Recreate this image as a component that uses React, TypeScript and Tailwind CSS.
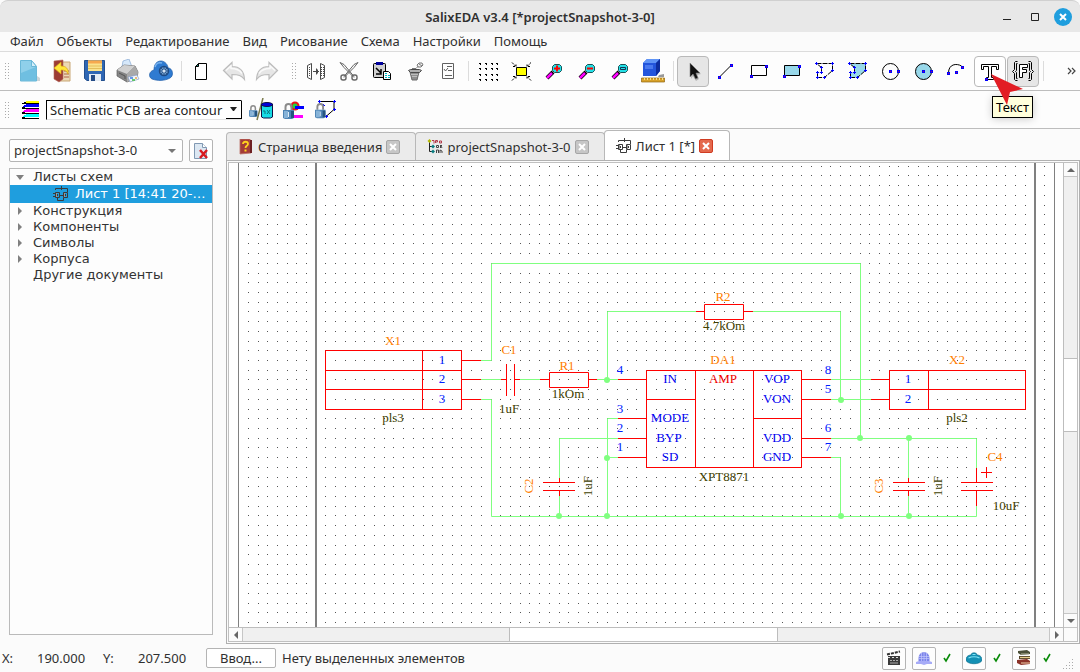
import type { ReactNode } from "react";

const menuItems = [
  "Файл",
  "Объекты",
  "Редактирование",
  "Вид",
  "Рисование",
  "Схема",
  "Настройки",
  "Помощь",
];

function Icon({ children, size = 24 }: { children: ReactNode; size?: number }) {
  return (
    <svg
      width={size}
      height={size}
      viewBox={`0 0 ${size} ${size}`}
      fill="none"
      className="shrink-0"
      aria-hidden="true"
    >
      {children}
    </svg>
  );
}

function NewIcon() {
  return (
    <Icon>
      <path d="M4 22h19v-3l-3-2" fill="#b9c3c8" opacity=".7" />
      <path d="M3.500 1.500h11l5 6v14.500h-16z" fill="#8fd0ea" stroke="#6ab8d8" />
      <path d="M4 14l15-6v13.500H4z" fill="#56b1d8" opacity=".55" />
      <path d="M14.500 1.500v6h5z" fill="#d5effa" stroke="#6ab8d8" />
    </Icon>
  );
}

function OpenIcon() {
  return (
    <Icon>
      <path d="M9 3h11v19H9z" fill="#ecd9b4" stroke="#c9a777" />
      <path d="M14 12h5M14 15h5M14 18h5" stroke="#b0654a" />
      <path d="M4 2l9-1v19l-4 3-5-3z" fill="#9c3c34" stroke="#b4685c" strokeWidth=".6" />
      <path
        d="M4 9l7-6v4c5 0 8 3 7 8-1-3-3-4-7-4v4z"
        fill="#ffe63a"
        stroke="#d9a417"
        strokeWidth=".7"
      />
    </Icon>
  );
}

function SaveIcon() {
  return (
    <Icon>
      <path d="M1.500 1.500h20v20H4l-2.500-2z" fill="#2f67b4" stroke="#24508f" />
      <path d="M5 1.500h14V12H5z" fill="#fbe38d" />
      <path d="M5 1.500h14v3H5z" fill="#f7a94e" />
      <path d="M5 7h14M5 9.500h14" stroke="#e4bf5c" />
      <path d="M6 15h12v7H6z" fill="#e4ecf5" />
      <path d="M8 16h4v6H8z" fill="#244b86" />
    </Icon>
  );
}

function PrintIcon() {
  return (
    <Icon>
      <path d="M6 8L7 2l6-2 3 8z" fill="#d6e8fa" stroke="#86a9d2" strokeWidth=".7" />
      <path d="M1 11l7-5 11 1 3 6-1 6-10 4-10-6z" fill="#858585" stroke="#5c5c5c" strokeWidth=".7" />
      <path d="M1 11l7-5 11 1-8 8z" fill="#d0d0d0" />
      <path d="M11 15l8-8 3 6-1 6-10 4z" fill="#a9a9a9" />
      <path d="M3 14l6 3v3" stroke="#555" />
      <path d="M12 18l9-2 2 4-9 3z" fill="#f0f5fd" stroke="#7d95c2" strokeWidth=".6" />
      <path d="M14 19h3" stroke="#3978e0" strokeWidth="1.500" />
      <path d="M16 21h3" stroke="#3fbf3f" strokeWidth="1.500" />
      <path d="M19 19h2" stroke="#e9a848" strokeWidth="1.500" />
    </Icon>
  );
}

function CloudIcon() {
  return (
    <Icon>
      <path
        d="M3 20c-4-2-3-8 2-9 0-6 3-9 7-9s7 4 7 7c5 0 6 8 2 10-5 3-13 3-18 1z"
        fill="#2f7bd1"
        stroke="#1e5ba8"
        strokeWidth=".7"
      />
      <path d="M6 8c1-4 4-5 7-4" stroke="#79b4f0" strokeWidth="1.500" />
      <circle cx="15" cy="12" r="4.500" fill="#6f9bc9" stroke="#1d4a85" strokeWidth="1.500" />
      <path d="M15 8v8M11 12h8M12 9l6 6M18 9l-6 6" stroke="#2c568b" />
      <circle cx="15" cy="12" r="1.500" fill="#d5e3f2" />
    </Icon>
  );
}

function SheetIcon() {
  return (
    <Icon>
      <path d="M9.500 4.500h8v16h-11v-13z" fill="#fff" stroke="#000" />
      <path d="M6.500 7.500l3-3v3z" fill="#158a7e" stroke="#000" />
    </Icon>
  );
}

function UndoIcon({ flip = false }: { flip?: boolean }) {
  return (
    <Icon>
      <g transform={flip ? "matrix(-1 0 0 1 24 0)" : undefined}>
        <path
          d="M1.500 11.500L10 3.500v4c8 0 12 4 12.500 13-3-4-6-5-12.500-5v4.500z"
          fill="#e6e6e6"
          stroke="#bcbcbc"
          strokeWidth="1.200"
        />
        <path d="M4 11.500L9 7v2.500c6 0 9 2 11 5" stroke="#fafafa" strokeWidth="1.500" />
      </g>
    </Icon>
  );
}

function MirrorIcon() {
  return (
    <Icon>
      <g stroke="#4b4b4b">
        <path d="M3.500 6.500v12l4 2V4.500zM20.500 6.500v12l-4 2V4.500z" />
        <path
          d="M3 8.500h4M3 10.500h4M3 12.500h4M3 14.500h4M3 16.500h4M17 8.500h4M17 10.500h4M17 12.500h4M17 14.500h4M17 16.500h4"
          strokeDasharray="1 1"
        />
        <path d="M9 12.500h6M13.500 10.500v4M12.500 9.500v6" />
      </g>
    </Icon>
  );
}

function CutIcon() {
  return (
    <Icon>
      <path d="M3 3.500l4 2 10 12M21 3.500l-4 2-10 12M3 3.500l4 5 10 10M21 3.500l-4 5-10 10" stroke="#666" />
      <rect x="4" y="16" width="5" height="5" rx="2" stroke="#666" strokeWidth="1.400" />
      <rect x="15" y="16" width="5" height="5" rx="2" stroke="#666" strokeWidth="1.400" />
    </Icon>
  );
}

function PasteIcon() {
  return (
    <Icon>
      <rect x="3.500" y="4.500" width="12" height="14" rx="1" fill="#d0d0d0" stroke="#000" />
      <path d="M6 3h7v3H6z" fill="#00009c" />
      <path d="M6 9l5 5M11 10v5H6" stroke="#000" strokeWidth="1.500" />
      <path d="M13.500 12.500h5l2 2v6h-7z" fill="#fff" stroke="#000" />
      <path d="M15 14.500h3M15 16.500h5M15 18.500h5" stroke="#00b8c4" strokeDasharray="2 1" />
    </Icon>
  );
}

function BucketIcon() {
  return (
    <Icon>
      <path d="M7 13h9l-2 8H9z" fill="#8f8f8f" stroke="#6a6a6a" />
      <path d="M5.500 11.500l2-1h9l2 1-2 2h-9z" fill="#b0b0b0" stroke="#4a4a4a" />
      <path d="M8 15.500h7M9 17.500h5" stroke="#bdbdbd" />
      <path d="M14 6l2-2h3l1 2-2 2h-3z" stroke="#777" fill="#f3f3f3" />
      <path d="M9 9.500h4l2-2M16 5l3 2" stroke="#777" />
    </Icon>
  );
}

function ListIcon() {
  return (
    <Icon>
      <path d="M6.500 4.500h11v15h-11zM11 7.500h5M12 11.500h4M9 16.500h7M8 10l1.500 2L12 9" stroke="#606060" />
    </Icon>
  );
}

function GridIcon() {
  return (
    <Icon>
      {[4, 9, 15, 20].map((y) =>
        [3, 9, 15, 20].map((x) => (
          <path key={`${x}-${y}`} d={`M${x} ${y}h2v2h-1v-1h-1z`} fill="#000" />
        ))
      )}
    </Icon>
  );
}

function FitIcon() {
  return (
    <Icon>
      <path d="M7.500 8.500h10v8h-10z" fill="#ff0" stroke="#000" />
      <path
        d="M3 3.500l4 4M22 3.500l-4 4M3 21.500l4-4M22 21.500l-4-4M4 7.500h3v-3M21 7.500h-3v-3M4 17.500h3v3M21 17.500h-3v3"
        stroke="#000"
        strokeDasharray="2 1"
      />
    </Icon>
  );
}

function ZoomIcon({ sign }: { sign: string }) {
  return (
    <Icon>
      <path d="M5 19l6-6" stroke="#000" strokeWidth="4" />
      <path d="M5 19l5-5" stroke="#f0f" strokeWidth="2.500" />
      <path d="M12.500 5.500h5l2 2v4l-2 2h-5l-2-2v-4z" fill="#22e0e6" stroke="#1b5257" />
      {sign === "frame" ? (
        <path d="M12.500 8.500h5v2h-5z" stroke="#135" />
      ) : (
        <path d="M12 9.500h6" stroke="#f00" strokeWidth="2" />
      )}
      {sign === "plus" && <path d="M15 6.500v6" stroke="#f00" strokeWidth="2" />}
    </Icon>
  );
}

function CubeIcon() {
  return (
    <Icon>
      <path d="M18 16l5-1v3h-6z" fill="#999" />
      <path d="M2 4l4-4h13v12l-4 5H2z" fill="#2355dc" />
      <path d="M2 4l4-4h13l-4 4z" fill="#5f94f6" />
      <path d="M15 4l4-4v12l-4 5z" fill="#0d2d9e" />
      <path d="M4 6h8v4H4z" fill="#5282f4" opacity=".8" />
      <path d="M.5 19h23v4H.5z" fill="#d8a22a" stroke="#916410" strokeWidth=".7" />
      <path d="M3.500 19v2M6.500 19v2M9.500 19v2M12.500 19v2M15.500 19v2M18.500 19v2M21.500 19v2" stroke="#f6dc89" />
    </Icon>
  );
}

function PointerIcon() {
  return (
    <Icon>
      <path d="M11 6l9 9-4 1 2 4-3 2-3-5-2 3z" fill="#888" opacity=".5" />
      <path d="M9 4v14l3-3 2.500 5 2.500-1-2-5h4z" fill="#111" stroke="#888" strokeWidth=".6" />
    </Icon>
  );
}

// Blue square handle with a violet core, the marker every drawing tool uses
function Handle({ x, y }: { x: number; y: number }) {
  return (
    <>
      <rect x={x} y={y} width="3" height="3" fill="#00f" />
      <rect x={x + 1} y={y + 1} width="1" height="1" fill="#b00060" />
    </>
  );
}

function LineIcon() {
  return (
    <Icon>
      <path d="M6 17.500L18 5.500" stroke="#000" />
      <Handle x={4} y={17} />
      <Handle x={16} y={5} />
    </Icon>
  );
}

function RectIcon({ fill = "none" }: { fill?: string }) {
  return (
    <Icon>
      <path d="M4.500 6.500h15v10h-15z" stroke="#000" fill={fill} />
      <Handle x={3} y={16} />
      <Handle x={18} y={6} />
    </Icon>
  );
}

function PolyIcon({ fill = "none" }: { fill?: string }) {
  return (
    <Icon>
      <path d="M3.500 4.500h16v7l-8 7h-7v-5h4v-5z" fill={fill} stroke="#000" strokeDasharray="5 1" />
      <path
        d="M2 4.500h3M3.500 3v3M18 4.500h3M19.500 3v3M18 11.500h3M19.500 10v3M10 18.500h3M11.500 17v3M3 18.500h3M4.500 17v3M3 13.500h3M4.500 12v3M7 13.500h3M8.500 12v3M7 8.500h3M8.500 7v3"
        stroke="#00f"
      />
    </Icon>
  );
}

function CircleIcon({ fill = "none" }: { fill?: string }) {
  return (
    <Icon>
      <circle cx="11.500" cy="12.500" r="8" stroke="#000" fill={fill} />
      <Handle x={10} y={11} />
      <Handle x={18} y={11} />
    </Icon>
  );
}

function ArcIcon() {
  return (
    <Icon>
      <path d="M3.500 14c0-9 8-10 13-7" stroke="#000" />
      <Handle x={2} y={13} />
      <Handle x={10} y={12} />
      <Handle x={16} y={7} />
    </Icon>
  );
}

function TextIcon() {
  return (
    <Icon>
      <path
        d="M3.500 5.500h17v5h-2v-3h-5v11h2v2h-7v-2h2v-11h-5v3h-2z"
        fill="#fff"
        stroke="#000"
      />
      <Handle x={7} y={19} />
    </Icon>
  );
}

function FragmentIcon() {
  return (
    <Icon>
      <path
        d="M6.500 2.500h-2l-1 1v7l-2 2 2 2v6l1 1h2M17.500 2.500h2l1 1v7l2 2-2 2v6l-1 1h-2M6.500 4.500h-1v7l-1 1 1 1v6h1M17.500 4.500h1v7l1 1-1 1v6h-1"
        stroke="#000"
      />
      <path d="M8.500 5.500h8v3h-5v2h4v3h-4v5h-3z" fill="#fff" stroke="#000" />
    </Icon>
  );
}

function LayersIcon() {
  return (
    <svg width="20" height="20" shapeRendering="crispEdges" className="shrink-0" aria-hidden="true">
      <path d="M5 1h13v2H3z" fill="#ff0" />
      <path d="M6 4h12v3H1z" fill="#00f" />
      <path d="M6 9h12v3H1z" fill="#f0f" />
      <path d="M6 14h12v3H1z" fill="#0ff" />
      <path d="M1 3h17v1H1zM1 8h17v1H1zM1 13h17v1H1zM1 18h17v1H1z" fill="#000" />
      <path d="M1 7h3v1H1zM1 12h3v1H1zM1 17h3v1H1zM3 2h2v1H3z" fill="#000" />
    </svg>
  );
}

function Padlock({ transform }: { transform: string }) {
  return (
    <g transform={transform}>
      <path d="M2.500 7V4a3 3 0 016 0v3" stroke="#8b8b8b" strokeWidth="2" />
      <path d="M0 7h11v8l-2 1H2l-2-1z" fill="#4f84b4" />
      <path d="M1 8h4v7H1z" fill="#86b3d8" />
      <path d="M8 8h3v7H8z" fill="#26557f" />
      <path d="M5.500 9v5" stroke="#dcebf5" />
    </g>
  );
}

function LockNetIcon() {
  return (
    <Icon>
      <Padlock transform="translate(0 7) scale(.75)" />
      <path d="M14 0L8 22" stroke="#7b7b4c" strokeWidth="1.500" />
      <path d="M12.500 6h11v13l-2 1h-7l-2-1z" fill="#16dce6" stroke="#114" />
      <ellipse cx="18" cy="6.500" rx="5.500" ry="2" fill="#00d" stroke="#114" />
      <path d="M14 13h2v3M18 12l3 4M21 12l-3 4" stroke="#08757c" />
    </Icon>
  );
}

function LockLayerIcon() {
  return (
    <Icon>
      <circle cx="14" cy="8" r="4.500" fill="#e81818" />
      <circle cx="14" cy="8" r="2.500" fill="#20d83c" />
      <path d="M14 9.500h9" stroke="#00f" strokeWidth="3" />
      <path d="M12 18.500h10" stroke="#f0f" strokeWidth="3" />
      <Padlock transform="translate(2 5)" />
    </Icon>
  );
}

function LockPolyIcon() {
  return (
    <Icon>
      <path d="M6 3.500h15v8l-8 7" stroke="#000" />
      <path
        d="M5 3.500h3M6.500 2v3M20 3.500h3M21.500 2v3M20 11.500h3M21.500 10v3M12 18.500h3M13.500 17v3M9 7.500h3M10.500 6v3"
        stroke="#00f"
      />
      <Padlock transform="translate(2 5) scale(.95)" />
    </Icon>
  );
}

function SchemeIcon() {
  return (
    <Icon size={16}>
      <path
        d="M2.500 6.500h4v5h-4zM10.500 6.500h4v5h-4zM2.500 4V2.500h12V6M6 9.500h5M0 7.500h2M0 10.500h2M4.500 12v2.500h6V12M8.500 0v4"
        stroke="#3a3a3a"
      />
      <path d="M4.500 8v2M12.500 8v2" stroke="#3a3a3a" />
      <path d="M3 7h1v4H3zM11 7h1v4h-1z" fill="#999" />
    </Icon>
  );
}

function TreeIcon() {
  return (
    <Icon size={16}>
      <path d="M2.500 2v10.500H6M2.500 7.500H6" stroke="#222" />
      <path d="M2.500 0l2 2-2 2-2-2z" fill="#b3b800" />
      <path d="M5 1.500h2v3M8.500 4V1.500h2V3h-2M12.500 2v2h2V2h-2" stroke="#b33a4a" />
      <path d="M4 7.500l2-2 2 2-2 2zM4 12.500l2-2 2 2-2 2z" fill="#0a7d80" />
      <path d="M9.500 6.500h2v2h-2zM13.500 6v3M15 6l-1 1 1 2M9.500 11v3M9.500 11h2v3M13 14v-3l2 1v2" stroke="#444" />
    </Icon>
  );
}

function HelpBookIcon() {
  return (
    <Icon size={16}>
      <path d="M2 0h10l1 14-11 1z" fill="#a33c38" stroke="#bb7065" strokeWidth=".8" />
      <path d="M12 1h2v13h-2z" fill="#6d1f22" />
      <path d="M5 5c0-3 5-3 5 0 0 2-2.500 1.500-2.500 4" stroke="#ffd21f" strokeWidth="1.800" />
      <path d="M6.500 10.500h2v2h-2z" fill="#ffd21f" />
    </Icon>
  );
}

function ToolButton({
  label,
  state = "plain",
  children,
}: {
  label: string;
  state?: "plain" | "pressed" | "hover";
  children: ReactNode;
}) {
  const look = {
    plain: "border-transparent",
    pressed: "border-[#b9b9b9] bg-[#e6e6e6]",
    hover: "border-[#b9b9b9] bg-white",
  }[state];
  return (
    <button
      aria-label={label}
      className={`relative flex h-[31px] w-8 shrink-0 items-center justify-center rounded-sm border ${look}`}
    >
      {children}
    </button>
  );
}

function Separator() {
  return (
    <div className="flex h-5 w-1.5 shrink-0 justify-center">
      <div className="w-px bg-[#dcdcdc]" />
    </div>
  );
}

function Grip() {
  return (
    <svg width="5" height="18" className="shrink-0" aria-hidden="true">
      {[0, 3, 6, 9, 12, 15].map((y) => (
        <path key={y} d={`M0 ${y + 1}h1v1h-1zM3 ${y + 1}h1v1h-1z`} fill="#aaa" />
      ))}
    </svg>
  );
}

function CloseMark({ active = false }: { active?: boolean }) {
  return (
    <button
      aria-label="Закрыть вкладку"
      className={`flex size-3.5 items-center justify-center rounded-xs border ${
        active ? "border-[#d03c22] bg-[#e4694d]" : "border-[#a6a6a6] bg-[#c6c6c6]"
      }`}
    >
      <svg width="8" height="8" viewBox="0 0 8 8" aria-hidden="true">
        <path d="M1 1l6 6M7 1L1 7" stroke="#fff" strokeWidth="2" />
      </svg>
    </button>
  );
}

function Tab({ label, active = false, children }: { label: string; active?: boolean; children: ReactNode }) {
  return (
    <div
      className={`flex items-center gap-1 rounded-t-sm border border-[#b8b8b8] ${
        active
          ? "-mb-px h-[31px] border-b-white bg-white pl-[11px] pr-4"
          : "-mr-px h-7 border-b-0 bg-[#ebebeb] pl-[11px] pr-[15px]"
      }`}
    >
      {children}
      <a href="#sheet">{label}</a>
      <CloseMark active={active} />
    </div>
  );
}

function MainToolbar() {
  return (
    <div className="flex h-[39px] items-center gap-px border-b border-[#bdbdbd] bg-[#fdfdfd] pl-[5px] pr-1">
      <Grip />
      <div className="w-px" />
      <ToolButton label="Новый"><NewIcon /></ToolButton>
      <ToolButton label="Открыть"><OpenIcon /></ToolButton>
      <ToolButton label="Сохранить"><SaveIcon /></ToolButton>
      <ToolButton label="Печать"><PrintIcon /></ToolButton>
      <ToolButton label="Облако"><CloudIcon /></ToolButton>
      <Separator />
      <ToolButton label="Лист"><SheetIcon /></ToolButton>
      <ToolButton label="Отменить"><UndoIcon /></ToolButton>
      <ToolButton label="Повторить"><UndoIcon flip /></ToolButton>
      <div className="w-[7px]" />
      <Grip />
      <div className="w-px" />
      <ToolButton label="Отразить"><MirrorIcon /></ToolButton>
      <ToolButton label="Вырезать"><CutIcon /></ToolButton>
      <ToolButton label="Вставить"><PasteIcon /></ToolButton>
      <ToolButton label="Удалить"><BucketIcon /></ToolButton>
      <ToolButton label="Свойства"><ListIcon /></ToolButton>
      <Separator />
      <ToolButton label="Сетка"><GridIcon /></ToolButton>
      <ToolButton label="Вписать"><FitIcon /></ToolButton>
      <ToolButton label="Увеличить"><ZoomIcon sign="plus" /></ToolButton>
      <ToolButton label="Уменьшить"><ZoomIcon sign="minus" /></ToolButton>
      <ToolButton label="Показать область"><ZoomIcon sign="frame" /></ToolButton>
      <ToolButton label="Вид 3D"><CubeIcon /></ToolButton>
      <Separator />
      <ToolButton label="Выбор" state="pressed"><PointerIcon /></ToolButton>
      <ToolButton label="Линия"><LineIcon /></ToolButton>
      <ToolButton label="Прямоугольник"><RectIcon /></ToolButton>
      <ToolButton label="Закрашенный прямоугольник"><RectIcon fill="#98d8ea" /></ToolButton>
      <ToolButton label="Полигон"><PolyIcon /></ToolButton>
      <ToolButton label="Закрашенный полигон"><PolyIcon fill="#98d8ea" /></ToolButton>
      <ToolButton label="Окружность"><CircleIcon /></ToolButton>
      <ToolButton label="Круг"><CircleIcon fill="#98d8ea" /></ToolButton>
      <ToolButton label="Дуга"><ArcIcon /></ToolButton>
      <div className="relative">
        <ToolButton label="Текст" state="hover"><TextIcon /></ToolButton>
        <div
          role="tooltip"
          className="absolute left-[18px] top-10 z-10 border border-black bg-[#ffffdc] px-[3px] leading-5 text-black shadow-[0_1px_8px_rgba(0,0,0,0.2)]"
        >
          Текст
        </div>
        <svg width="32" height="32" className="absolute left-[17px] top-[18px] z-20" aria-hidden="true">
          <path d="M0 0l32 15-13 3-3 13z" fill="#e21d24" />
        </svg>
      </div>
      <ToolButton label="Фрагмент" state="pressed"><FragmentIcon /></ToolButton>
      <Separator />
      <button aria-label="Ещё" className="ml-auto">
        <svg width="9" height="8" viewBox="0 0 9 8" fill="none" stroke="#444" aria-hidden="true">
          <path d="M1 1l3 3-3 3M5 1l3 3-3 3" strokeWidth="1.200" />
        </svg>
      </button>
    </div>
  );
}

function LayerToolbar() {
  return (
    <div className="flex h-[38px] items-center border-b border-[#bdbdbd] bg-[#fdfdfd] pl-[5px]">
      <Grip />
      <button aria-label="Слои" className="ml-[11px] mr-[5px]">
        <LayersIcon />
      </button>
      <div className="relative">
        <select
          aria-label="Слой"
          className="h-5 w-[196px] appearance-none border border-[#e4e4e4] border-l-black border-t-black bg-white pl-[3px] text-[#222]"
        >
          <option>Schematic PCB area contour</option>
        </select>
        <div className="pointer-events-none absolute bottom-px right-0 top-px flex w-4 items-center justify-center border-b border-r border-black bg-white">
          <svg width="7" height="4" aria-hidden="true">
            <path d="M0 0h7L4 4H3z" fill="#222" />
          </svg>
        </div>
      </div>
      <div className="flex gap-2 pl-[7px]">
        <button aria-label="Блокировать цепи"><LockNetIcon /></button>
        <button aria-label="Блокировать слой"><LockLayerIcon /></button>
        <button aria-label="Блокировать контур"><LockPolyIcon /></button>
      </div>
    </div>
  );
}

function TreeRow({ label, arrow }: { label: string; arrow?: "open" | "closed" }) {
  return (
    <li className="flex h-4 items-center">
      <span className="flex w-[23px] shrink-0 pl-1.5">
        {arrow === "open" && (
          <svg width="8" height="5" aria-hidden="true"><path d="M0 0h8L4 5z" fill="#808080" /></svg>
        )}
        {arrow === "closed" && (
          <svg width="5" height="8" className="ml-0.5" aria-hidden="true"><path d="M0 0v8l4-4z" fill="#808080" /></svg>
        )}
      </span>
      {label}
    </li>
  );
}

function Sidebar() {
  return (
    <aside className="flex w-[213px] shrink-0 flex-col gap-1.5 pb-[9px] pl-[9px] pt-2.5">
      <div className="flex gap-1.5">
        <div className="relative flex-1">
          <select
            aria-label="Проект"
            className="block h-[23px] w-full appearance-none rounded-xs border border-[#b4b4b4] bg-[#fefefe] pb-0.5 pl-1"
          >
            <option>projectSnapshot-3-0</option>
          </select>
          <svg width="8" height="4" className="pointer-events-none absolute right-[7px] top-2.5" aria-hidden="true">
            <path d="M0 0h8L4 4z" fill="#777" />
          </svg>
        </div>
        <button
          aria-label="Закрыть проект"
          className="flex h-[23px] w-6 items-center justify-center rounded-xs border border-[#b4b4b4] bg-white"
        >
          <Icon size={18}>
            <path d="M2.500 1.500h8l4 4v11h-12z" fill="#dce8f3" stroke="#8199b3" />
            <path d="M10.500 1.500v4h4" stroke="#8199b3" fill="#fff" />
            <path d="M8 8l7 8M15 8l-7 8" stroke="#d71920" strokeWidth="2.500" />
          </Icon>
        </button>
      </div>
      <ul className="flex-1 border border-[#bababa] bg-[#fdfdfd] font-['DejaVu_Sans',sans-serif] text-[13px] text-[#333]">
        <TreeRow label="Листы схем" arrow="open" />
        <li className="flex h-[18px] items-center gap-1.5 whitespace-nowrap bg-[#1f9ede] pl-[43px] text-white">
          <SchemeIcon />
          Лист 1 [14:41 20-…
        </li>
        <TreeRow label="Конструкция" arrow="closed" />
        <TreeRow label="Компоненты" arrow="closed" />
        <TreeRow label="Символы" arrow="closed" />
        <TreeRow label="Корпуса" arrow="closed" />
        <TreeRow label="Другие документы" />
      </ul>
    </aside>
  );
}

const GRID = 9.711;

function gridDots() {
  let d = "";
  for (let row = 0; row < 48; row++) {
    for (let col = 0; col < 83; col++) {
      d += `M${Math.floor(19.3 + col * GRID)} ${Math.floor(3.285 + row * GRID)}h1v1h-1z`;
    }
  }
  return d;
}

const wires = [
  "M481 360.500H491.500V263.500H860.500V438.500",
  "M481 379.500H501M520 379.500H540M597 379.500H618",
  "M481 399.500H491.500V516.500H976.500V506",
  "M607.500 379.500V311.500H696M753 311.500H840.500V399.500",
  "M831 379.500H871M831 399.500H871",
  "M831 438.500H976.500V468M831 457.500H840.500V516.500",
  "M618 418.500H607.500V516.500M607.500 457.500H618",
  "M618 438.500H559.500V478M559.500 496V516.500",
  "M908.500 438.500V478M908.500 496V516.500",
];

const parts = [
  "M325.500 350.500H461.500V409.500H325.500zM422.500 350.500V409.500M325.500 370.500H461.500M325.500 389.500H461.500",
  "M461 360.500H481M461 379.500H481M461 399.500H481",
  "M501 379.500H506M506.500 364V396M514.500 364V396M515 379.500H520",
  "M540 379.500H549M549.500 372.500H588.500V387.500H549.500zM589 379.500H597",
  "M696 311.500H704M704.500 304.500H743.500V319.500H704.500zM744 311.500H753",
  "M646.500 370.500H801.500V467.500H646.500zM695.500 370.500V467.500M753.500 370.500V467.500",
  "M646.500 399.500H695.500M753.500 418.500H801.500",
  "M618 379.500H646M618 418.500H646M618 438.500H646M618 457.500H646",
  "M802 379.500H831M802 399.500H831M802 438.500H831M802 457.500H831",
  "M889.500 370.500H1025.500V409.500H889.500zM928.500 370.500V409.500M889.500 389.500H1025.500",
  "M871 379.500H889M871 399.500H889",
  "M559.500 478V482M543 482.500H575M543 490.500H575M559.500 491V496",
  "M908.500 478V482M893 482.500H925M893 490.500H925M908.500 491V496",
  "M976.500 468V482M961 482.500H993M961 490.500H993M976.500 491V506",
  "M981 472.500H992M986.500 467V478",
];

const joints = [
  [607, 380], [841, 400], [860, 438], [909, 438], [607, 458],
  [559, 516], [607, 516], [841, 516], [909, 516],
];

type Label = [text: string, x: number, y: number, rotated?: boolean];

const names: Label[] = [
  ["X1", 393, 345], ["C1", 509, 354], ["R1", 567, 370], ["R2", 723, 301], ["DA1", 723, 364],
  ["X2", 957, 364], ["C4", 995, 461], ["C2", 533, 486, true], ["C3", 883, 486, true],
];

const values: Label[] = [
  ["pls3", 393, 422], ["1uF", 509, 413], ["1kOm", 568, 398], ["4.7kOm", 724, 330],
  ["XPT8871", 724, 481], ["pls2", 957, 422], ["10uF", 1006, 510],
  ["1uF", 592, 486, true], ["1uF", 942, 486, true],
];

const pins: Label[] = [
  ["1", 442, 364], ["2", 442, 383], ["3", 442, 403],
  ["4", 620, 374], ["3", 620, 413], ["2", 620, 432], ["1", 620, 451],
  ["8", 828, 374], ["5", 828, 393], ["6", 828, 432], ["7", 828, 451],
  ["1", 908, 383], ["2", 908, 403],
];

const ports: Label[] = [
  ["IN", 670, 383], ["MODE", 670, 422], ["BYP", 669, 442], ["SD", 670, 461],
  ["VOP", 777, 383], ["VON", 777, 403], ["VDD", 777, 442], ["GND", 777, 461],
];

function Labels({ items, color }: { items: Label[]; color: string }) {
  return (
    <g fill={color}>
      {items.map(([text, x, y, rotated]) => (
        <text key={`${text}-${x}-${y}`} x={x} y={y} transform={rotated ? `rotate(-90 ${x} ${y})` : undefined}>
          {text}
        </text>
      ))}
    </g>
  );
}

function Schematic() {
  return (
    <svg
      className="min-h-0 w-full flex-1 bg-white font-['Liberation_Serif',serif] text-[13px]"
      textAnchor="middle"
      role="img"
      aria-label="Лист 1"
    >
      <path d={gridDots()} fill="#555" />
      <path d="M9.500 0V2000M825.500 0V2000" stroke="#808080" />
      <path d="M87 0V2000M806 0V2000" stroke="#808080" strokeWidth="2" />
      <g transform="translate(-229 -163)">
        <path d={wires.join("")} stroke="#80ff80" fill="none" />
        <path d={parts.join("")} stroke="#f00" fill="none" />
        {joints.map(([x, y]) => (
          <circle key={`${x}-${y}`} cx={x} cy={y} r="3" fill="#80ff80" />
        ))}
        <Labels items={names} color="#ff8000" />
        <Labels items={values} color="#404000" />
        <Labels items={pins} color="#0020ff" />
        <Labels items={ports} color="#0000f0" />
        <text x="723" y="383" fill="#f00000">AMP</text>
      </g>
    </svg>
  );
}

function ScrollArrow({ d, label }: { d: string; label: string }) {
  return (
    <button aria-label={label} className="flex size-[13px] shrink-0 items-center justify-center bg-[#fbfbfb]">
      <svg width="8" height="8" aria-hidden="true">
        <path d={d} fill="#666" />
      </svg>
    </button>
  );
}

function Workspace() {
  return (
    <main className="ml-[13px] flex min-w-0 flex-1 flex-col">
      <div className="flex h-[31px] items-end">
        <Tab label="Страница введения"><HelpBookIcon /></Tab>
        <Tab label="projectSnapshot-3-0"><TreeIcon /></Tab>
        <Tab label="Лист 1 [*]" active><SchemeIcon /></Tab>
      </div>
      <div className="flex flex-1 border border-[#b0b0b0] bg-[#fbfbfb] p-px">
        <div className="flex min-w-0 flex-1 border border-[#c0c0c0]">
          <div className="flex min-w-0 flex-1 flex-col">
            <Schematic />
            <div className="flex h-3.5 border-t border-[#bdbdbd]">
              <ScrollArrow label="Влево" d="M6 0v8L2 4z" />
              <div className="flex flex-1 border-x border-[#c6c6c6] bg-[#f0f0f0]">
                <div className="ml-[33%] w-1/3 border-x border-[#bdbdbd] bg-white" />
              </div>
              <ScrollArrow label="Вправо" d="M2 0v8l4-4z" />
            </div>
          </div>
          <div className="flex w-3.5 flex-col border-l border-[#bdbdbd]">
            <ScrollArrow label="Вверх" d="M0 6h8L4 2z" />
            <div className="flex flex-1 flex-col border-y border-[#c6c6c6] bg-[#f0f0f0]">
              <div className="flex-[10]" />
              <div className="flex-[4] border-y border-[#bdbdbd] bg-white" />
              <div className="flex-[10]" />
            </div>
            <ScrollArrow label="Вниз" d="M0 2h8L4 6z" />
            <div className="h-3.5 border-t border-[#c6c6c6]" />
          </div>
        </div>
      </div>
    </main>
  );
}

function StatusButton({ label, children }: { label: string; children: ReactNode }) {
  return (
    <button
      aria-label={label}
      className="flex h-[23px] w-6 items-center justify-center rounded-xs border border-[#b4b4b4] bg-[#fdfdfd]"
    >
      {children}
    </button>
  );
}

function Tick() {
  return (
    <svg width="26" height="10" viewBox="0 0 26 10" fill="none" aria-hidden="true">
      <path d="M8 5l2 3 4-7" stroke="#078a07" strokeWidth="1.600" />
    </svg>
  );
}

function StatusBar() {
  return (
    <footer className="flex h-7 items-center pl-0.5">
      <span className="w-[35px]">X:</span>
      <span className="w-12 text-right">190.000</span>
      <span className="ml-[18px] w-[35px]">Y:</span>
      <span className="w-12 text-right">207.500</span>
      <button className="ml-5 h-5 w-[70px] rounded-xs border border-[#b4b4b4] bg-white leading-[18px]">
        Ввод...
      </button>
      <span className="ml-1.5">Нету выделенных элементов</span>
      <div className="ml-auto flex items-center pr-1.5">
        <StatusButton label="Запись">
          <Icon size={16}>
            <path d="M2 6h12v9H2z" fill="#3a3a3a" />
            <path d="M2 7.500h12" stroke="#ddd" strokeDasharray="2 2" />
            <path d="M1 4.500l13-3" stroke="#333" strokeWidth="2" strokeDasharray="3 1" />
            <path d="M4 10.500h2M7 10.500h2M10 10.500h2M4 13h8" stroke="#aaa" />
          </Icon>
        </StatusButton>
        <div className="w-1.5" />
        <StatusButton label="Глобус">
          <Icon size={16}>
            <path d="M0 12l3-1h10l3 1v2h-5l-3 1-3-1H0z" fill="#a6abf7" />
            <path d="M2.500 11V8a5.500 6 0 0111 0v3z" fill="#7c84ea" />
            <path d="M3 6.500h10M2.500 8.500h11M5.500 3v8M8 2v9M10.500 3v8" stroke="#c4c8fc" strokeWidth=".7" />
          </Icon>
        </StatusButton>
        <Tick />
        <StatusButton label="Облако">
          <Icon size={16}>
            <path
              d="M0 10c0-4 3-5 5-5 0-3 6-3 6 0 2 0 5 1 5 5-1 5-15 5-16 0z"
              fill="#1490b4"
              stroke="#0a6a88"
              strokeWidth=".6"
            />
            <path d="M2.500 8c3-1.500 8-1.500 11 0M6.500 4.500h3" stroke="#7fe3f5" strokeWidth="1.200" />
          </Icon>
        </StatusButton>
        <Tick />
        <StatusButton label="Библиотека">
          <Icon size={16}>
            <path d="M2 1l9-1 3 2v2l-9 1-3-2z" fill="#4b5038" />
            <path d="M3 6h11v3H3z" fill="#55452a" />
            <path d="M4 7.500h10" stroke="#e8cf8c" strokeWidth="1.200" />
            <path d="M1 10l10-1 3 2v3l-9 1-4-2z" fill="#8b3228" />
            <path d="M5 13h9" stroke="#e2b796" strokeWidth="1.200" />
            <path d="M5 4h8" stroke="#b6b69b" />
          </Icon>
        </StatusButton>
        <Tick />
        <svg width="12" height="12" className="mt-3.5" aria-hidden="true">
          <path
            d="M10 0h1v1h-1zM7 3h1v1h-1zM10 3h1v1h-1zM4 6h1v1h-1zM7 6h1v1h-1zM10 6h1v1h-1zM1 9h1v1h-1zM4 9h1v1h-1zM7 9h1v1h-1zM10 9h1v1h-1z"
            fill="#aaa"
          />
        </svg>
      </div>
    </footer>
  );
}

export default function App() {
  return (
    <div className="flex min-h-screen flex-col bg-[#fbfbfb] font-['Noto_Sans',sans-serif] text-[13px] leading-4 text-[#303030]">
      <header className="grid h-8 grid-cols-[1fr_auto_1fr] items-center rounded-t-lg border-t border-[#d0d0d0] bg-[#e8e8e8]">
        <h1 className="col-start-2 font-semibold">SalixEDA v3.4 [*projectSnapshot-3-0]</h1>
        <div className="flex items-center justify-end gap-2.5 pr-2">
          <button aria-label="Свернуть">
            <svg width="18" height="12" aria-hidden="true"><path d="M5 8.500h8" stroke="#222" /></svg>
          </button>
          <button aria-label="Развернуть">
            <svg width="18" height="12" aria-hidden="true">
              <path d="M5.500 2.500h7v7h-7z" stroke="#222" fill="none" />
            </svg>
          </button>
          <button aria-label="Закрыть" className="flex size-[18px] items-center justify-center rounded-full bg-[#1f9ede]">
            <svg width="8" height="8" aria-hidden="true"><path d="M1 1l6 6M7 1L1 7" stroke="#fff" strokeWidth="2" /></svg>
          </button>
        </div>
      </header>
      <nav className="flex h-5 items-center gap-[13px] border-b border-[#dcdcdc] px-2.5 pb-0.5">
        {menuItems.map((item) => (
          <button key={item}>{item}</button>
        ))}
      </nav>
      <MainToolbar />
      <LayerToolbar />
      <div className="flex flex-1">
        <Sidebar />
        <Workspace />
      </div>
      <StatusBar />
    </div>
  );
}
